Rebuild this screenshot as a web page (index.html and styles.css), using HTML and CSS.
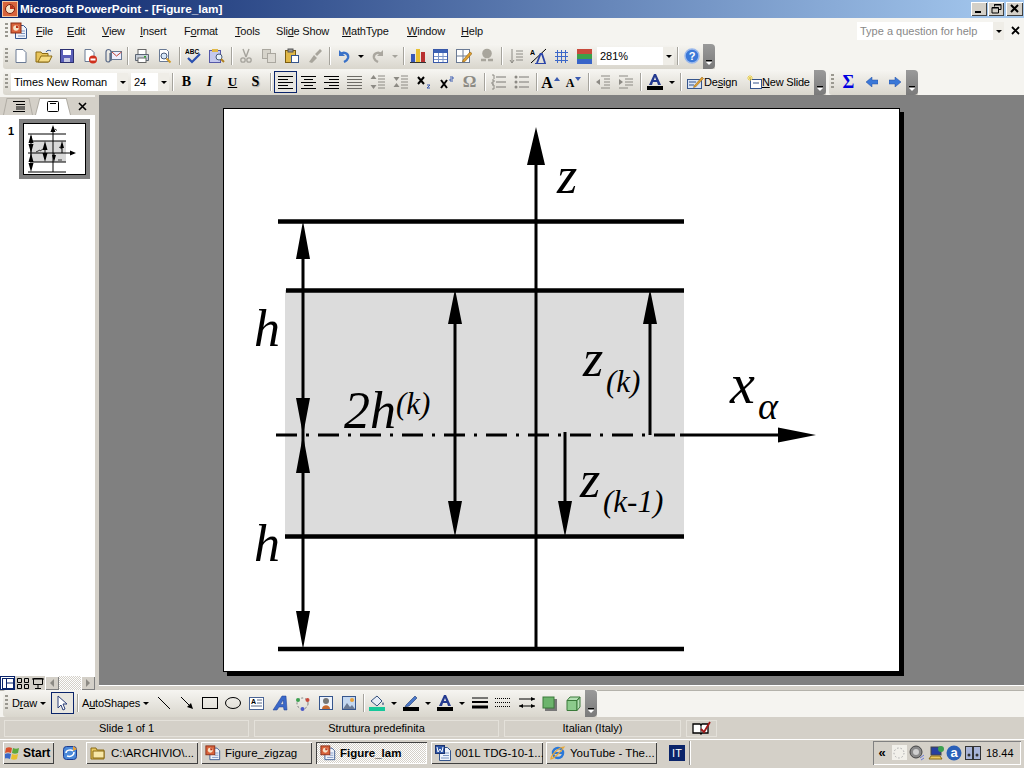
FILE: index.html
```html
<!doctype html>
<html lang="en">
<head>
<meta charset="UTF-8" />
<title>Microsoft PowerPoint - [Figure_lam]</title>
<link rel="stylesheet" href="styles.css">
</head>
<body>
<svg class="defs" width="0" height="0">
  <symbol id="doc" viewBox="0 0 16 16"><path d="M2.5 1.5h8l3 3v10h-11z" fill="#fff" stroke="#35558c"/><path d="M5 6h6M5 8.5h6M5 11h6" stroke="#7d97c4"/></symbol>
  <symbol id="ppt" viewBox="0 0 18 18"><path d="M5.500 3.500h8l3 3v10h-11z" fill="#eef3fb" stroke="#35558c"/><path d="M11 9h4M11 11.500h4M8 14h7" stroke="#7d97c4"/><rect x="1" y="1" width="10" height="10" fill="#d9633b" stroke="#8a2c14"/><circle cx="6" cy="6" r="2.800" fill="#f7e3c8"/><path d="M6 6V3.500A2.500 2.500 0 0 1 8.500 6z" fill="#b8321a"/></symbol>
</svg>

<div class="window">
  <div class="titlebar">
    <svg class="appicon" width="16" height="16" viewBox="0 0 16 16"><rect x=".5" y=".5" width="15" height="15" fill="#d9633b" stroke="#f2c9a6"/><circle cx="8" cy="8" r="4.500" fill="#f7e3c8" stroke="#7a1e0c"/><path d="M8 8V4a4 4 0 0 1 4 4z" fill="#b8321a"/></svg>
    <span class="titletext">Microsoft PowerPoint - [Figure_lam]</span>
    <div class="winbtns">
      <span class="winbtn"><svg width="10" height="10"><rect x="1" y="7" width="6" height="2"/></svg></span>
      <span class="winbtn"><svg width="11" height="10"><path d="M3.500 2.500V.5h6.500v5H8M1 3.500h6.500v5.500H1z" fill="none" stroke="#000"/><path d="M3 1h7M1 4h6.500" stroke="#000"/></svg></span>
      <span class="winbtn wide"><svg width="10" height="10"><path d="M1 1l7 7M8 1l-7 7" stroke="#000" stroke-width="2"/></svg></span>
    </div>
  </div>

  <div class="menubar">
    <span class="grip"></span>
    <svg class="menuicon" width="18" height="18"><use href="#ppt"/></svg>
    <span class="menu m1"><u>F</u>ile</span>
    <span class="menu m2"><u>E</u>dit</span>
    <span class="menu m3"><u>V</u>iew</span>
    <span class="menu m4"><u>I</u>nsert</span>
    <span class="menu m5">F<u>o</u>rmat</span>
    <span class="menu m6"><u>T</u>ools</span>
    <span class="menu m7">Sli<u>d</u>e Show</span>
    <span class="menu m8"><u>M</u>athType</span>
    <span class="menu m9"><u>W</u>indow</span>
    <span class="menu m10"><u>H</u>elp</span>
    <span class="helpbox">Type a question for help<i class="drop"></i></span>
    <svg class="helpclose" width="9" height="9"><path d="M1 1l7 7M8 1l-7 7" stroke="#000" stroke-width="1.800"/></svg>
  </div>

  <div class="tbrow">
    <div class="toolbar standard">
      <span class="grip"></span>
      <span class="btn"><svg width="16" height="16"><path d="M3 1.500h7l3 3v10H3z" fill="#fff" stroke="#6a7a94"/></svg></span>
      <span class="btn"><svg width="18" height="16"><path d="M1 4h5l1 1.500h6V14H1z" fill="#e8c45a" stroke="#8a6a14"/><path d="M3 14l3-6h11l-3 6z" fill="#f6dc84" stroke="#8a6a14"/><path d="M11 4c1-2 3-2 5-1" fill="none" stroke="#335a9e"/></svg></span>
      <span class="btn"><svg width="16" height="16"><rect x="1.500" y="1.500" width="13" height="13" fill="#5a5fb8" stroke="#2c2f70"/><rect x="4" y="2" width="8" height="5" fill="#fff"/><rect x="5" y="10" width="6" height="4" fill="#c9cbe4"/></svg></span>
      <span class="btn"><svg width="16" height="16"><path d="M3 1.500h6l3 3v9H3z" fill="#fff" stroke="#6a7a94"/><circle cx="11" cy="11.500" r="4" fill="#cf2f1c"/><rect x="8.500" y="10.500" width="5" height="2" fill="#fff"/></svg></span>
      <span class="btn"><svg width="18" height="16"><rect x="7.500" y="3.500" width="10" height="8" fill="#eef" stroke="#6a7a94"/><path d="M8 4l4.500 4 5-4" fill="none" stroke="#c04030"/><path d="M6 5v7a2 2 0 0 1-4 0V4a2.500 2.500 0 0 1 5 0v9" fill="none" stroke="#5a6a88" stroke-width="1.200"/></svg></span>
      <span class="sep"></span>
      <span class="btn"><svg width="16" height="16"><rect x="4" y="1.500" width="8" height="5" fill="#fff" stroke="#666"/><path d="M1.500 6.500h13v6h-13z" fill="#c7ced8" stroke="#5a6472"/><rect x="4" y="10" width="8" height="4.500" fill="#fff" stroke="#666"/><rect x="10" y="8" width="2" height="1.500" fill="#2ca02c"/></svg></span>
      <span class="btn"><svg width="16" height="16"><path d="M2.500 1.500h7l2 2v10h-9z" fill="#fff" stroke="#6a7a94"/><circle cx="7" cy="8" r="3" fill="#d8e8f8" stroke="#4a5a78"/><path d="M9.500 10.500l4 4" stroke="#d09a28" stroke-width="2"/></svg></span>
      <span class="sep"></span>
      <span class="btn"><svg width="18" height="16"><text class="abc" x="0" y="6">ABC</text><path d="M3 10l4 4 8-8" fill="none" stroke="#2a50b0" stroke-width="2.200"/></svg></span>
      <span class="btn"><svg width="18" height="16"><rect x="1.500" y="2.500" width="11" height="12" fill="#c4c8ee" stroke="#5558a8"/><rect x="4" y="1" width="6" height="3" fill="#e0b848"/><circle cx="11" cy="9" r="3" fill="#e6f0fa" stroke="#4a5a78"/><path d="M13 11l3 3" stroke="#b08020" stroke-width="2"/></svg></span>
      <span class="sep"></span>
      <span class="btn off"><svg width="16" height="16"><path d="M5 1l3 8M11 1L8 9" stroke="#a5a39c" stroke-width="1.400"/><circle cx="5" cy="12" r="2.200" fill="none" stroke="#a5a39c" stroke-width="1.300"/><circle cx="11" cy="12" r="2.200" fill="none" stroke="#a5a39c" stroke-width="1.300"/></svg></span>
      <span class="btn off"><svg width="16" height="16"><rect x="1.500" y="1.500" width="8" height="9" fill="#d6d3ca" stroke="#aaa79f"/><rect x="6.500" y="5.500" width="8" height="9" fill="#dedbd3" stroke="#aaa79f"/></svg></span>
      <span class="btn"><svg width="16" height="16"><rect x="1.500" y="2.500" width="10" height="12" fill="#e0b848" stroke="#7a5c10"/><rect x="4" y="1" width="5" height="3" fill="#999" stroke="#555"/><rect x="7.500" y="7.500" width="7" height="7" fill="#fff" stroke="#35558c"/></svg></span>
      <span class="btn off"><svg width="16" height="16"><path d="M2 14l5-7 3 3-5 5zM8 6l5-5 2 2-5 5z" fill="#a8a59c"/></svg></span>
      <span class="sep"></span>
      <span class="btn undo"><svg width="14" height="14"><path d="M2 1v6h6" fill="#3a72c8"/><path d="M3 6c3-4 9-2 8 3-.5 2-2 3-4 4" fill="none" stroke="#3a72c8" stroke-width="2.400"/></svg></span>
      <span class="dd"><i class="tri"></i></span>
      <span class="btn undo off"><svg width="14" height="14"><path d="M12 1v6H6" fill="#aaa79f"/><path d="M11 6C8 2 2 4 3 9c.5 2 2 3 4 4" fill="none" stroke="#aaa79f" stroke-width="2.400"/></svg></span>
      <span class="dd"><i class="tri off"></i></span>
      <span class="sep"></span>
      <span class="btn"><svg width="16" height="16"><rect x="1" y="6" width="4" height="8" fill="#3858b8"/><rect x="6" y="1" width="4" height="13" fill="#e8c030"/><rect x="11" y="4" width="4" height="10" fill="#b83030"/><path d="M0 14.500h16" stroke="#333"/></svg></span>
      <span class="btn"><svg width="15" height="14"><rect x=".5" y=".5" width="14" height="13" fill="#fff" stroke="#3858a8"/><rect x="1" y="1" width="13" height="3" fill="#3c62b4"/><path d="M5.500 4v9M10 4v9M1 7.500h13M1 10.500h13" stroke="#7a94c8"/></svg></span>
      <span class="btn"><svg width="16" height="16"><rect x=".5" y="1.500" width="13" height="13" fill="#fff" stroke="#6a7a94"/><path d="M7 2v12M1 8h12" stroke="#6a7a94"/><path d="M7 12l7-8 2 1.500-7 8-2.500.5z" fill="#e0a030" stroke="#8a5c10" stroke-width=".6"/></svg></span>
      <span class="btn off"><svg width="16" height="16"><circle cx="8" cy="5.500" r="4.800" fill="#a8a59c"/><path d="M2 12h5M9 12h5" stroke="#a8a59c" stroke-width="2.500"/></svg></span>
      <span class="sep"></span>
      <span class="btn off"><svg width="16" height="16"><path d="M4 1v14M2 12l2 3 2-3M8 3h7M8 6h7M8 9h7M8 12h7" stroke="#8c8a84" fill="none"/></svg></span>
      <span class="btn"><svg width="17" height="16"><text class="tiny" x="0" y="7">A</text><path d="M16 1L1 15" stroke="#000"/><path d="M7 15l3.500-9h1.500l3 9" fill="none" stroke="#2c45a8" stroke-width="1.800"/><path d="M5 15.500h11" stroke="#2c45a8"/></svg></span>
      <span class="btn"><svg width="15" height="15"><path d="M3.500 1v13M7.500 1v13M11.500 1v13M1 3.500h13M1 7.500h13M1 11.500h13" stroke="#3c68c8"/></svg></span>
      <span class="btn"><svg width="15" height="15"><rect width="15" height="5" fill="#c84a3c"/><rect y="5" width="15" height="5" fill="#3ca04a"/><rect y="10" width="15" height="5" fill="#3864c8"/></svg></span>
      <span class="combo zoomcombo">281%<i class="drop"></i></span>
      <span class="sep"></span>
      <span class="btn"><svg width="16" height="16"><circle cx="8" cy="8" r="7" fill="#3a78d8" stroke="#9ab8ec" stroke-width="1.500"/><text class="q" x="8" y="12" text-anchor="middle">?</text></svg></span>
      <span class="chev"><i></i></span>
    </div>
  </div>

  <div class="tbrow fmtrow">
    <div class="toolbar format">
      <span class="grip"></span>
      <span class="combo fontcombo">Times New Roman<i class="drop"></i></span>
      <span class="combo sizecombo">24<i class="drop"></i></span>
      <span class="sep"></span>
      <span class="btn"><b class="lt">B</b></span>
      <span class="btn"><b class="lt it">I</b></span>
      <span class="btn"><b class="lt un">U</b></span>
      <span class="btn"><b class="lt sh">S</b></span>
      <span class="sep wider"></span>
      <span class="btn active"><svg width="15" height="13"><path d="M0 .5h15M0 3.500h10M0 6.500h15M0 9.500h10M0 12.500h15" stroke="#000"/></svg></span>
      <span class="btn"><svg width="15" height="13"><path d="M0 .5h15M3 3.500h9M0 6.500h15M3 9.500h9M0 12.500h15" stroke="#000"/></svg></span>
      <span class="btn"><svg width="15" height="13"><path d="M0 .5h15M5 3.500h10M0 6.500h15M5 9.500h10M0 12.500h15" stroke="#000"/></svg></span>
      <span class="btn"><svg width="15" height="13"><path d="M0 .5h15M0 3.500h15M0 6.500h15M0 9.500h15M0 12.500h15" stroke="#6d6b66"/></svg></span>
      <span class="btn"><svg width="16" height="16"><path d="M3.500 1l-3 4h6zM3.500 15l-3-4h6z" fill="#8c8a84"/><path d="M8 2h7M8 5h7M8 8h7M8 11h7M8 14h7" stroke="#8c8a84"/></svg></span>
      <span class="btn"><svg width="16" height="16"><path d="M3.500 7l-3-4h6zM3.500 9l-3 4h6z" fill="#8c8a84"/><path d="M8 2h7M8 5h7M8 8h7M8 11h7M8 14h7" stroke="#8c8a84"/></svg></span>
      <span class="btn"><svg width="14" height="13"><path d="M1 1l6 7M7 1L1 8" stroke="#000" stroke-width="2"/><path d="M10 9h3l-3 3h3" fill="none" stroke="#3a5ab0"/></svg></span>
      <span class="btn"><svg width="14" height="13"><path d="M1 4l6 8M7 4l-6 8" stroke="#000" stroke-width="2"/><path d="M10 1h3v2h-3v2h3" fill="none" stroke="#3a5ab0"/></svg></span>
      <span class="btn"><span class="omega">Ω</span></span>
      <span class="sep"></span>
      <span class="btn"><svg width="16" height="16"><path d="M5 3h10M5 8h10M5 13h10" stroke="#7a7874"/><path d="M1 1h2v4M1 6h2v2H1v2h2M1 11h2v4H1" fill="none" stroke="#8c8a84"/></svg></span>
      <span class="btn"><svg width="16" height="16"><path d="M5 3h10M5 8h10M5 13h10" stroke="#7a7874"/><circle cx="2" cy="3" r="1.500" fill="#8c8a84"/><circle cx="2" cy="8" r="1.500" fill="#8c8a84"/><circle cx="2" cy="13" r="1.500" fill="#8c8a84"/></svg></span>
      <span class="sep"></span>
      <span class="btn"><span class="grow big">A</span><svg class="updown" width="6" height="4"><path d="M3 0l3 4H0z" fill="#3a5ab0"/></svg></span>
      <span class="btn"><span class="grow">A</span><svg class="updown" width="6" height="4"><path d="M3 4L0 0h6z" fill="#3a5ab0"/></svg></span>
      <span class="sep"></span>
      <span class="btn"><svg width="16" height="14"><path d="M6 1h9M9 4h6M9 7h6M9 10h6M6 13h9" stroke="#8c8a84"/><path d="M1 7l4-3v6z" fill="#8c8a84"/></svg></span>
      <span class="btn"><svg width="16" height="14"><path d="M1 1h9M7 4h8M7 7h8M7 10h8M1 13h9" stroke="#8c8a84"/><path d="M5 7L1 4v6z" fill="#8c8a84"/></svg></span>
      <span class="sep"></span>
      <span class="btn"><svg width="16" height="16"><path d="M2 11L7 0h2l5 11h-3l-1-3H6l-1 3zM6.800 6h2.400L8 3z" fill="#243a90"/><rect y="12" width="16" height="4" fill="#000"/></svg></span>
      <span class="dd"><i class="tri"></i></span>
      <span class="sep"></span>
      <span class="textbtn design"><svg width="17" height="15"><rect x=".5" y="4.500" width="14" height="9" fill="#d8e4f6" stroke="#35558c"/><path d="M2 7h7M2 10h5" stroke="#35558c"/><path d="M7 11l8-9 1.500 1.500-8 8.500-2 .5z" fill="#e0a030" stroke="#8a5c10" stroke-width=".5"/></svg><span>De<u>s</u>ign</span></span>
      <span class="textbtn newslide"><svg width="16" height="15"><rect x="4.500" y="4.500" width="11" height="9" fill="#fff" stroke="#35558c"/><path d="M7 8h6" stroke="#35558c"/><path d="M4 0v6M1 3h6M2 1l4 4M6 1L2 5" stroke="#e8cf50"/></svg><span><u>N</u>ew Slide</span></span>
      <span class="chev"><i></i></span>
    </div>
    <div class="toolbar mathbar">
      <span class="grip"></span>
      <span class="btn mbtn"><span class="sigma">Σ</span></span>
      <span class="btn mbtn"><svg width="12" height="10"><path d="M0 5l6-5v3h6v4H6v3z" fill="#3a78d8" stroke="#2850a0" stroke-width=".5"/></svg></span>
      <span class="btn mbtn"><svg width="12" height="10"><path d="M12 5L6 0v3H0v4h6v3z" fill="#3a78d8" stroke="#2850a0" stroke-width=".5"/></svg></span>
      <span class="chev"><i></i></span>
    </div>
  </div>

  <div class="main">
    <div class="sidepanel">
      <div class="tabs">
        <span class="tab"><svg width="13" height="11"><path d="M1 .5h12M4 3.500h9M4 6h9M4 8h9M1 10.500h12" stroke="#000"/></svg></span>
        <span class="tab current"><svg width="12" height="11"><rect x=".5" y=".5" width="11" height="10" rx="1" fill="#fff" stroke="#000"/><path d="M3 2.500h6" stroke="#000"/></svg></span>
        <svg class="panelclose" width="9" height="9"><path d="M1 1l7 7M8 1l-7 7" stroke="#000" stroke-width="1.600"/></svg>
      </div>
      <div class="thumbs">
        <span class="slidenum">1</span>
        <div class="thumb">
          <svg width="63" height="52" viewBox="23 123 63 52">
            <rect x="30" y="141" width="36" height="21" fill="#d8d8d8"/>
            <path d="M28 134h38M30 141h36M30 162h36M28 172h38" stroke="#000"/>
            <path d="M53 127v45M28 153h38" stroke="#000"/>
            <path d="M66 153h6" stroke="#000"/>
            <path d="M53 125l-2.500 7h5zM76 153l-6-2.500v5zM31 134l-2.500 9h5zM31 153l-2.500-9h5zM31 153l-2.500 9h5zM31 172l-2.500-9h5zM45 141l-2.500 9h5zM45 162l-2.500-9h5zM62 141l-2 7h4zM54 162l-2-7h4z" fill="#000"/>
            <path d="M55 129l2 1.500M59 147l3 2M58 160h4M36 152l4-2M40 151l3-2" stroke="#333"/>
            <path d="M31 136v26M45 145v14M62 146v7M54 153v6" stroke="#000"/>
          </svg>
        </div>
      </div>
      <div class="viewbar">
        <span class="viewbtn active"><svg width="12" height="11"><rect x=".5" y=".5" width="11" height="10" fill="#fff" stroke="#0a246a"/><path d="M4.500 1v9M5 5h6" stroke="#0a246a"/></svg></span>
        <span class="viewbtn"><svg width="12" height="11"><path d="M.5.500h4v4h-4zM7.500.500h4v4h-4zM.5 6.500h4v4h-4zM7.500 6.500h4v4h-4z" fill="none" stroke="#000"/></svg></span>
        <span class="viewbtn"><svg width="12" height="11"><path d="M1.500.5h9v6h-9zM6 7v3M3 10.500h6" fill="none" stroke="#000"/><path d="M0 1h12" stroke="#000"/></svg></span>
        <span class="hscroll">
          <span class="scrollbtn"><i class="tl"></i></span>
          <span class="track"></span>
          <span class="scrollbtn"><i class="tr"></i></span>
        </span>
      </div>
    </div>
    <div class="splitter"></div>
    <div class="workspace">
      <div class="slide">
        <svg class="figure" width="675" height="562" viewBox="224 109 675 562">
          <rect class="shade" x="285" y="290" width="399" height="247"/>
          <path class="thick" d="M278 221.500H684M286 290.500H684M285 536.500H684M278 649H684"/>
          <path class="thin" d="M536 649V160M303 235V635M455 300V526M650 300V435M565 432V510"/>
          <path class="dashed" d="M276 435H680"/>
          <path class="thin" d="M680 435H785"/>
          <path class="head" d="M536 127l-9 38h18zM816 435l-38-7.500v15zM303 221l-7 38h14zM303 435l-7-37h14zM303 435l-7 38h14zM303 649l-7-38h14zM455 289l-7 35h14zM455 537l-7-36h14zM650 289l-7 35h14zM565 537l-7-36h14z"/>
          <text class="sym" x="557" y="193">z</text>
          <text class="sym" x="254" y="346">h</text>
          <text class="sym" x="254" y="561">h</text>
          <text class="sym" x="344" y="428">2h</text>
          <text class="sub" x="396" y="414">(k)</text>
          <text class="sym" x="583" y="376">z</text>
          <text class="sub" x="606" y="392">(k)</text>
          <text class="sym" x="580" y="497">z</text>
          <text class="sub" x="603" y="512">(k-1)</text>
          <text class="sym large" x="730" y="403">x</text>
          <text class="alpha" x="758" y="419">α</text>
        </svg>
      </div>
    </div>
  </div>

  <div class="drawrow">
    <div class="toolbar drawbar">
      <span class="grip"></span>
      <span class="textbtn drawmenu"><span>D<u>r</u>aw</span><i class="tri"></i></span>
      <span class="btn active"><svg width="13" height="16"><path d="M2 1v12l3-3 2 5 2-1-2-5h4z" fill="#fff" stroke="#2a3e78"/></svg></span>
      <span class="sep"></span>
      <span class="textbtn shapesmenu"><span>A<u>u</u>toShapes</span><i class="tri"></i></span>
      <span class="btn"><svg width="14" height="14"><path d="M1 1l12 12" stroke="#000"/></svg></span>
      <span class="btn"><svg width="14" height="14"><path d="M1 1l10 10" stroke="#000"/><path d="M13 13l-6-2 4-4z" fill="#000"/></svg></span>
      <span class="btn"><svg width="16" height="12"><rect x=".5" y=".5" width="15" height="11" fill="none" stroke="#000"/></svg></span>
      <span class="btn"><svg width="16" height="12"><ellipse cx="8" cy="6" rx="7.500" ry="5.500" fill="none" stroke="#000"/></svg></span>
      <span class="btn"><svg width="15" height="13"><rect x=".5" y=".5" width="14" height="12" fill="#fff" stroke="#4a6494"/><text class="tiny" x="2" y="7">A</text><path d="M8 3h5M8 6h5M2 9h11" stroke="#5a6a88"/></svg></span>
      <span class="btn"><svg width="16" height="16"><path d="M1 15 10 1h4l1 14h-3l-.5-3H7l-2 3zM8.500 9.500h3L11 5z" fill="#3a68c8" stroke="#1c3c90" stroke-width=".5"/></svg></span>
      <span class="btn"><svg width="15" height="15"><circle cx="7.500" cy="7.500" r="5.500" fill="none" stroke="#777" stroke-dasharray="2 2"/><circle cx="3" cy="4" r="2" fill="#3ca050"/><circle cx="12.500" cy="4" r="2" fill="#c84a3c"/><circle cx="7.500" cy="13" r="2" fill="#4a58c8"/></svg></span>
      <span class="btn"><svg width="14" height="14"><rect x=".5" y=".5" width="13" height="13" fill="#eef3fb" stroke="#35558c"/><circle cx="7" cy="5" r="3" fill="#777"/><path d="M3 13c0-5 8-5 8 0z" fill="#c86a30"/></svg></span>
      <span class="btn"><svg width="14" height="14"><rect x=".5" y=".5" width="13" height="13" fill="#c4d8f0" stroke="#35558c"/><path d="M1 13l4-6 3 4 2-2 3 4z" fill="#6a7a94"/><circle cx="10" cy="4" r="2" fill="#e8a038"/></svg></span>
      <span class="sep"></span>
      <span class="btn colbtn"><svg width="16" height="16"><path d="M2 6l6-5 5 5-5 5z" fill="#e6ecf6" stroke="#34507c"/><path d="M14 7c1 1.500 1 3 0 3s-1-1.500 0-3z" fill="#34507c"/><rect y="12" width="16" height="4" fill="#16c79a"/></svg></span>
      <span class="dd"><i class="tri"></i></span>
      <span class="btn colbtn"><svg width="16" height="16"><path d="M3 10l9-9 2 2-8 8-4 1z" fill="#4a78c8" stroke="#243a70" stroke-width=".6"/><rect y="12" width="16" height="4" fill="#000"/></svg></span>
      <span class="dd"><i class="tri"></i></span>
      <span class="btn colbtn"><svg width="16" height="16"><path d="M2 11L7 0h2l5 11h-3l-1-3H6l-1 3zM6.800 6h2.400L8 3z" fill="#243a90"/><rect y="12" width="16" height="4" fill="#000"/></svg></span>
      <span class="dd"><i class="tri"></i></span>
      <span class="btn"><svg width="16" height="12"><path d="M0 1h16" stroke="#000"/><path d="M0 5h16" stroke="#000" stroke-width="2"/><path d="M0 10h16" stroke="#000" stroke-width="3"/></svg></span>
      <span class="btn"><svg width="16" height="12"><path d="M0 1.500h16M0 5.500h16M0 9.500h16" stroke="#000" stroke-dasharray="1 1"/></svg></span>
      <span class="btn"><svg width="16" height="14"><path d="M0 3h16M0 10h16" stroke="#000"/><path d="M16 3l-4-2v4zM0 10l4-2v4zM16 10l-4-2v4z" fill="#000"/></svg></span>
      <span class="btn"><svg width="15" height="15"><rect x="3" y="3" width="12" height="12" fill="#777"/><rect x="1" y="1" width="11" height="11" fill="#6cb46c" stroke="#3a7a3a"/></svg></span>
      <span class="btn"><svg width="15" height="15"><path d="M1 4.500h10v10H1z" fill="#8ccb8c" stroke="#3a7a3a"/><path d="M1 4.500L4 1h10l-3 3.500zM11 4.500L14 1v10l-3 3.500z" fill="#b6e0b6" stroke="#3a7a3a"/></svg></span>
      <span class="chev"><i></i></span>
    </div>
  </div>

  <div class="statusbar">
    <span class="panel p1">Slide 1 of 1</span>
    <span class="panel p2">Struttura predefinita</span>
    <span class="panel p3">Italian (Italy)</span>
    <span class="panel p4"><svg width="19" height="14"><path d="M1 3h7l1 1 1-1h6v9h-6l-1 1-1-1H1z" fill="#fff" stroke="#000" stroke-width="1.300"/><path d="M9 4v8" stroke="#000"/><path d="M9 8l3 3 6-10" fill="none" stroke="#a01818" stroke-width="1.800"/></svg></span>
  </div>

  <div class="taskbar">
    <span class="start"><svg width="16" height="14"><path d="M1 2c2-1 4-1 6 0l-1 5c-2-1-4-1-6 0z" fill="#d8502c"/><path d="M8 2c2 1 4 1 6 0l-1 5c-2 1-4 1-6 0z" fill="#5ca83c"/><path d="M0 8c2-1 4-1 6 0l-1 5c-2-1-4-1-6 0z" fill="#3a68c8"/><path d="M7 8c2 1 4 1 6 0l-1 5c-2 1-4 1-6 0z" fill="#e8c030"/></svg>Start</span>
    <span class="quick"><svg width="16" height="16"><rect x="1.500" y="1.500" width="13" height="13" rx="3" fill="#4a88d8" stroke="#1c3c90"/><path d="M4 8c0-3 5-4 7-2M5 11c3 1 7 0 7-4" fill="none" stroke="#fff" stroke-width="1.500"/><path d="M11 1l4 3-4 2z" fill="#e8a038"/></svg></span>
    <span class="taskbtn t1"><svg width="17" height="15"><path d="M1 3h5l1 2h7v9H1z" fill="#e8c860" stroke="#8a6a14"/><path d="M3 6h11v7H3z" fill="#f8e8a8" stroke="#8a6a14"/></svg><span class="label">C:\ARCHIVIO\...</span></span>
    <span class="taskbtn t2"><svg width="16" height="16"><use href="#ppt"/></svg><span class="label">Figure_zigzag</span></span>
    <span class="taskbtn t3 current"><svg width="16" height="16"><use href="#ppt"/></svg><span class="label">Figure_lam</span></span>
    <span class="taskbtn t4"><svg width="16" height="16"><path d="M4.500 2.500h8l3 3v10h-11z" fill="#eef3fb" stroke="#35558c"/><path d="M8 8h6M8 10.500h6M6 13h8" stroke="#7d97c4"/><rect x=".5" y=".5" width="9" height="8" fill="#3058a8" stroke="#1c3470"/><path d="M2 2l1 5 2-3 2 3 1-5" fill="none" stroke="#fff"/></svg><span class="label">001L TDG-10-1...</span></span>
    <span class="taskbtn t5"><svg width="16" height="16"><circle cx="8" cy="8" r="5" fill="none" stroke="#2a78d8" stroke-width="2.500"/><path d="M3 8h10" stroke="#2a78d8" stroke-width="2"/><path d="M1 14c0-3 6-11 13-12-2 3-9 11-13 12z" fill="none" stroke="#e8a838" stroke-width="1.200"/></svg><span class="label">YouTube - The...</span></span>
    <span class="lang">IT</span>
    <span class="taskdiv"></span>
    <div class="tray">
      <span class="chevrons">«</span>
      <span class="trayitem pale"><svg width="14" height="14"><circle cx="7" cy="7" r="5" fill="none" stroke="#aaa" stroke-dasharray="1.500 2"/></svg></span>
      <svg width="16" height="16"><circle cx="7" cy="7" r="6" fill="#8a8a8a" stroke="#444"/><circle cx="7" cy="7" r="3" fill="#cfcfcf"/><path d="M11 13l4-3M12 15l3-2" stroke="#6a7ad8"/></svg>
      <svg width="16" height="16"><rect x="3" y="2" width="10" height="8" fill="#2840a0" stroke="#444"/><path d="M1 14h13l-2-3H3z" fill="#e8c860" stroke="#8a6a14"/><circle cx="13" cy="4" r="3" fill="#3ca050"/></svg>
      <svg width="16" height="16"><circle cx="8" cy="8" r="7.500" fill="#2a60b8"/><text class="atray" x="8" y="12" text-anchor="middle">a</text></svg>
      <svg width="16" height="14"><rect x=".5" y=".5" width="7" height="13" fill="#a8b4d8" stroke="#333"/><rect x="8.500" y=".5" width="7" height="13" fill="#a8b4d8" stroke="#333"/><circle cx="4" cy="9" r="1.500" fill="#333"/><circle cx="12" cy="9" r="1.500" fill="#333"/></svg>
      <span class="clock">18.44</span>
    </div>
  </div>
</div>
</body>
</html>
```

FILE: styles.css
```css
html, body {
    margin: 0;
    padding: 0;
    height: 100%;
    overflow: hidden;
}
body {
    font-family: "Liberation Sans", Arial, sans-serif;
    font-size: 11px;
    color: #000;
    background: #f5f4f0;
}
svg {
    display: block;
    flex: none;
}
.defs {
    position: absolute;
}
.window {
    width: 1024px;
    height: 768px;
    display: flex;
    flex-direction: column;
}

/* title bar */
.titlebar {
    height: 18px;
    display: flex;
    align-items: center;
    padding-left: 2px;
    background: linear-gradient(to right, #0a246a, #a6caf0);
    flex: none;
}
.titletext {
    color: #fff;
    font-size: 11.800px;
    font-weight: bold;
    margin-left: 2px;
}
.winbtns {
    margin-left: auto;
    display: flex;
    gap: 1px;
    margin-right: 1px;
}
.winbtn {
    width: 16px;
    height: 14px;
    background: #d4d0c8;
    box-shadow: inset 1px 1px #fff, inset -1px -1px #404040;
    display: flex;
    align-items: center;
    justify-content: center;
}
.winbtn.wide {
    width: 17px;
    margin-left: 1px;
}

/* menu */
.menubar {
    height: 26px;
    flex: none;
    display: flex;
    align-items: center;
    padding-left: 3px;
    font-size: 11px;
    letter-spacing: -0.2px;
    color: #111;
}
.grip {
    width: 3px;
    height: 16px;
    margin: 0 2px 0 2px;
    background: repeating-linear-gradient(to bottom, #9a9890 0 2px, transparent 2px 4px);
    flex: none;
}
.menuicon {
    margin: 0;
}
.menu {
    white-space: nowrap;
    flex: none;
}
.m1 { margin-left: 8px; width: 31px; }
.m2 { width: 35px; }
.m3 { width: 38px; }
.m4 { width: 44px; }
.m5 { width: 51px; }
.m6 { width: 41px; }
.m7 { width: 66px; }
.m8 { width: 65px; }
.m9 { width: 54px; }
.m10 { width: 30px; }
.helpbox {
    position: absolute;
    left: 857px;
    top: 22px;
    width: 147px;
    height: 18px;
    background: #fff;
    color: #888;
    font-size: 11px;
    letter-spacing: 0;
    line-height: 18px;
    padding-left: 3px;
    box-sizing: border-box;
}
.helpclose {
    position: absolute;
    left: 1011px;
    top: 26px;
}

/* toolbars */
.tbrow {
    height: 25px;
    flex: none;
    display: flex;
    padding-left: 3px;
}
.fmtrow {
    height: 26px;
    padding-top: 1px;
    box-sizing: border-box;
}
.toolbar {
    display: flex;
    align-items: center;
    background: linear-gradient(to bottom, #f6f5f1, #d9d6cd);
    border-radius: 3px 0 0 3px;
    height: 100%;
    flex: none;
    padding-bottom: 1px;
    box-sizing: border-box;
}
.toolbar > .grip {
    margin: 0 1px 0 2px;
}
.btn {
    width: 23px;
    height: 22px;
    flex: none;
    display: flex;
    align-items: center;
    justify-content: center;
    position: relative;
    box-sizing: border-box;
}
.btn.active {
    border: 1px solid #0a246a;
    background: #e8e6e0;
}
.sep {
    width: 1px;
    height: 18px;
    flex: none;
    margin: 0 2.500px;
    background: #a5a39c;
    box-shadow: 1px 0 #fff;
}
.sep.wider {
    margin-right: 3.500px;
}
.dd {
    width: 11px;
    height: 22px;
    flex: none;
    display: flex;
    align-items: center;
    justify-content: center;
}
.tri {
    width: 0;
    height: 0;
    border: 3px solid transparent;
    border-top: 3px solid #000;
    border-bottom: 0;
    display: block;
}
.tri.off {
    border-top-color: #a5a39c;
}
.chev {
    width: 12px;
    height: calc(100% + 1px);
    margin-bottom: -1px;
    flex: none;
    background: linear-gradient(to bottom, #9a9a9a, #7a7a7a);
    border-radius: 0 4px 4px 0;
    position: relative;
}
.chev i {
    position: absolute;
    left: 3px;
    bottom: 4px;
    width: 0;
    height: 0;
    border: 3px solid transparent;
    border-top: 3px solid #fff;
    border-bottom: 0;
}
.chev::before {
    content: "";
    position: absolute;
    left: 3px;
    bottom: 8px;
    width: 6px;
    height: 1px;
    background: #000;
}
.combo {
    display: flex;
    align-items: center;
    background: #fff;
    height: 18px;
    padding-left: 3px;
    box-sizing: border-box;
    position: relative;
    flex: none;
    font-size: 11px;
    white-space: nowrap;
}
.drop {
    position: absolute;
    right: 0;
    top: 0;
    width: 11px;
    height: 18px;
    background: #efede7;
}
.drop::after {
    content: "";
    position: absolute;
    left: 3px;
    top: 8px;
    border: 3px solid transparent;
    border-top: 3px solid #000;
    border-bottom: 0;
}
.zoomcombo {
    width: 77px;
    margin-left: 1px;
}
.fontcombo {
    width: 117px;
    margin-left: 2px;
}
.sizecombo {
    width: 38px;
    margin-left: 3px;
}
.lt {
    font-family: "Liberation Serif", serif;
    font-size: 14px;
}
.it {
    font-style: italic;
}
.un {
    text-decoration: underline;
    font-size: 13px;
}
.sh {
    text-shadow: 1px 1px 1px #999;
}
.omega {
    font-family: "Liberation Serif", serif;
    font-size: 17px;
    font-weight: bold;
    color: #8c8a84;
}
.grow {
    font-family: "Liberation Serif", serif;
    font-weight: bold;
    font-size: 12px;
    margin-top: 2px;
}
.grow.big {
    font-size: 16px;
}
.updown {
    margin: -6px 0 0 1px;
}
.textbtn {
    display: flex;
    align-items: center;
    gap: 2px;
    flex: none;
    white-space: nowrap;
    height: 22px;
    font-size: 11px;
    letter-spacing: -0.2px;
    box-sizing: border-box;
}
.design {
    width: 57px;
    padding-left: 4px;
    gap: 0;
}
.newslide {
    width: 74px;
    padding-left: 6px;
    gap: 0;
}
.mathbar {
    margin-left: 3px;
}
.mathbar > .grip {
    margin-right: 3px;
}
.mbtn {
    width: 23px;
}
.sigma {
    font-family: "Liberation Serif", serif;
    font-size: 18px;
    font-weight: bold;
    color: #0000e0;
}
.tiny {
    font-size: 7px;
    font-weight: bold;
}
.abc {
    font-size: 6.500px;
    font-weight: bold;
}
.q {
    font-size: 11px;
    font-weight: bold;
    fill: #fff;
}

/* main area */
.main {
    flex: 1;
    min-height: 0;
    display: flex;
    background: #d4d0c8;
}
.sidepanel {
    width: 95px;
    flex: none;
    display: flex;
    flex-direction: column;
    background: #fff;
}
.tabs {
    height: 20px;
    background: #d4d0c8;
    display: flex;
    align-items: flex-end;
    padding-left: 3px;
    position: relative;
    flex: none;
    border-top: 2px solid #f5f4f0;
    box-sizing: border-box;
}
.tab {
    width: 30px;
    height: 17px;
    display: flex;
    align-items: center;
    justify-content: center;
    clip-path: polygon(12% 0, 88% 0, 100% 100%, 0 100%);
    background: #b0aca4;
    position: relative;
}
.tab svg {
    position: relative;
}
.tab::before {
    content: "";
    position: absolute;
    inset: 1px 1px 0 1px;
    clip-path: polygon(12% 0, 88% 0, 100% 100%, 0 100%);
    background: #d4d0c8;
}
.tab.current {
    width: 36px;
    margin-left: 2px;
}
.tab.current::before {
    background: #fff;
}
.panelclose {
    position: absolute;
    right: 8px;
    top: 5px;
}
.thumbs {
    flex: 1;
    display: flex;
    align-items: flex-start;
    padding: 4px 0 0 8px;
    position: relative;
}
.slidenum {
    font-weight: bold;
    font-size: 11px;
    width: 11px;
    margin-top: 6px;
}
.thumb {
    border: 4px solid #808080;
    width: 63px;
    height: 52px;
    background: #fff;
    box-shadow: inset 0 0 0 1px #000;
}
.viewbar {
    height: 14px;
    flex: none;
    display: flex;
    align-items: center;
    background: #d4d0c8;
}
.viewbtn {
    width: 15px;
    height: 14px;
    display: flex;
    align-items: center;
    justify-content: center;
    box-sizing: border-box;
}
.viewbtn.active {
    border: 1px solid #0a246a;
    background: #fff;
}
.hscroll {
    display: flex;
    flex: 1;
    height: 14px;
}
.scrollbtn {
    width: 14px;
    height: 14px;
    background: #d4d0c8;
    box-shadow: inset 1px 1px #fff, inset -1px -1px #808080;
    position: relative;
}
.scrollbtn i {
    position: absolute;
    top: 3px;
    border: 4px solid transparent;
}
.tl {
    left: 1px;
    border-right-color: #8c8a84 !important;
    border-left: 0 !important;
    margin-left: 4px;
}
.tr {
    left: 5px;
    border-left-color: #8c8a84 !important;
    border-right: 0 !important;
}
.track {
    flex: 1;
    background: repeating-conic-gradient(#fff 0 25%, #d4d0c8 0 50%) 0 0 / 2px 2px;
}
.splitter {
    width: 4px;
    flex: none;
    background: #d4d0c8;
}
.workspace {
    flex: 1;
    display: flex;
    align-items: center;
    justify-content: center;
    background: #808080;
    margin-bottom: 5px;
    box-shadow: 0 1px #fff;
}
.slide {
    width: 675px;
    height: 562px;
    border: 1px solid #000;
    background: #fff;
    box-shadow: 4px 4px #000;
}

/* diagram */
.shade {
    fill: #dcdcdc;
}
.thick {
    stroke: #000;
    stroke-width: 4.500;
    fill: none;
}
.thin {
    stroke: #000;
    stroke-width: 3;
    fill: none;
}
.dashed {
    stroke: #000;
    stroke-width: 3;
    fill: none;
    stroke-dasharray: 21 9 3 9;
}
.head {
    fill: #000;
}
.sym, .sub, .alpha {
    font-family: "Liberation Serif", "Times New Roman", serif;
    font-style: italic;
    fill: #000;
}
.sym {
    font-size: 52px;
}
.sym.large {
    font-size: 56px;
}
.sub {
    font-size: 31px;
}
.alpha {
    font-size: 38px;
}

/* draw toolbar */
.drawrow {
    height: 27px;
    flex: none;
    display: flex;
    padding-left: 3px;
    box-shadow: inset 0 1px #b4b2ab;
}
.drawbar .btn {
    width: 23.200px;
}
.drawbar .btn.active {
    width: 23px;
}
.drawmenu {
    width: 42px;
    padding-left: 3px;
    gap: 3px;
}
.shapesmenu {
    width: 72px;
    padding-left: 2px;
    gap: 3px;
}
.drawbar .btn.colbtn {
    width: 20px;
}
.drawbar .dd {
    width: 14px;
}

/* status */
.statusbar {
    height: 23px;
    flex: none;
    display: flex;
    align-items: center;
    gap: 5px;
    padding-left: 4px;
    background: #d4d0c8;
    border-bottom: 1px solid #fff;
    box-sizing: border-box;
}
.panel {
    height: 17px;
    box-sizing: border-box;
    border: 1px solid #e4e1da;
    display: flex;
    align-items: center;
    justify-content: center;
    font-size: 11px;
    flex: none;
}
.p1, .p2 { width: 245px; }
.p3 { width: 177px; }
.p4 { width: 31px; }

/* taskbar */
.taskbar {
    height: 28px;
    flex: none;
    display: flex;
    align-items: center;
    background: #d4d0c8;
    padding: 0 0 3px 3px;
    box-sizing: border-box;
    font-size: 11.500px;
}
.start {
    width: 51px;
    height: 22px;
    box-sizing: border-box;
    display: flex;
    align-items: center;
    gap: 2px;
    padding-left: 2px;
    font-weight: bold;
    font-size: 12px;
    background: #d4d0c8;
    box-shadow: inset 1px 1px #fff, inset -1px -1px #404040;
    flex: none;
}
.quick {
    width: 32px;
    display: flex;
    justify-content: center;
    flex: none;
}
.taskbtn {
    height: 22px;
    box-sizing: border-box;
    display: flex;
    align-items: center;
    gap: 4px;
    padding-left: 4px;
    background: #d4d0c8;
    box-shadow: inset 1px 1px #fff, inset -1px -1px #404040;
    flex: none;
    white-space: nowrap;
    overflow: hidden;
}
.t1 { width: 112px; }
.t2 { width: 111px; margin-left: 3px; }
.t3 { width: 111px; margin-left: 4px; }
.t4 { width: 112px; margin-left: 4px; }
.t5 { width: 111px; margin-left: 3px; }
.taskbtn.current {
    font-weight: bold;
    box-shadow: inset 1px 1px #404040, inset -1px -1px #fff;
    background: repeating-conic-gradient(#fff 0 25%, #d4d0c8 0 50%) 0 0 / 2px 2px;
}
.lang {
    width: 16px;
    height: 16px;
    margin-left: 12px;
    background: #0a246a;
    color: #fff;
    font-size: 11px;
    display: flex;
    align-items: center;
    justify-content: center;
    flex: none;
}
.taskdiv {
    width: 1px;
    height: 24px;
    margin-left: 4px;
    background: #808080;
    box-shadow: 1px 0 #fff;
    flex: none;
}
.tray {
    margin-left: auto;
    margin-right: 3px;
    width: 148px;
    height: 24px;
    box-sizing: border-box;
    display: flex;
    align-items: center;
    gap: 2.500px;
    box-shadow: inset 1px 1px #808080, inset -1px -1px #fff;
    padding-left: 2px;
    flex: none;
}
.chevrons {
    font-weight: bold;
    font-size: 13px;
    width: 14px;
    text-align: center;
}
.trayitem.pale {
    background: #f2f0ea;
    width: 15px;
    height: 15px;
    display: flex;
    align-items: center;
    justify-content: center;
}
.atray {
    fill: #fff;
    font-size: 13px;
    font-weight: bold;
}
.clock {
    margin-left: 3px;
    font-size: 11px;
}
```
